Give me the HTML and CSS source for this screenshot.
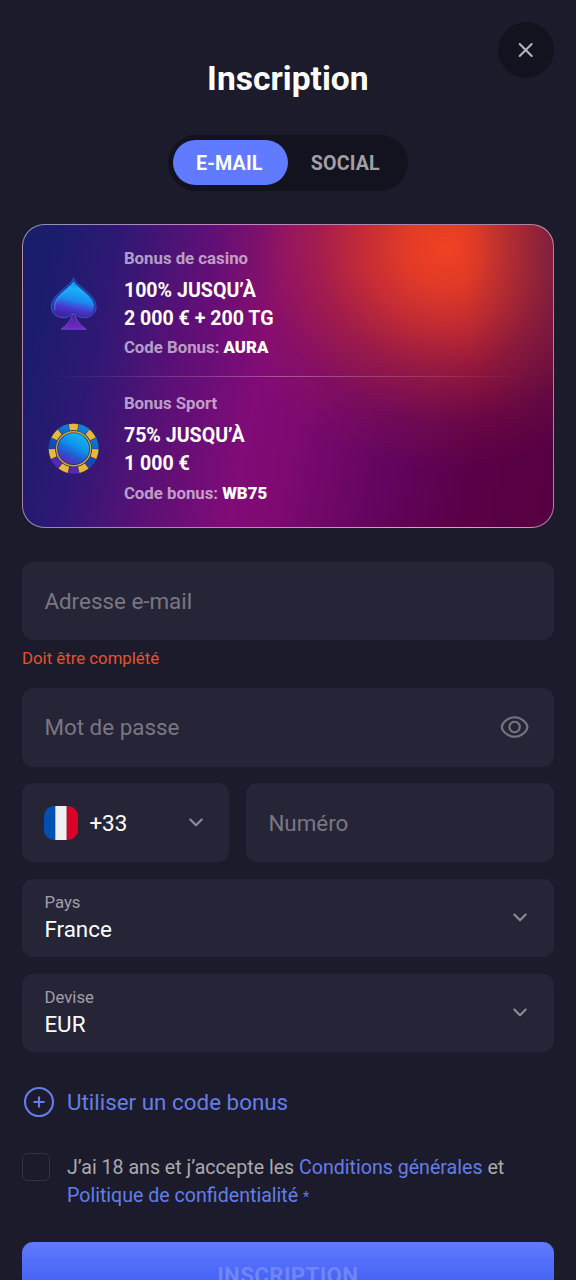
FILE: index.html
```html
<!DOCTYPE html>
<html lang="fr">
<head>
<meta charset="utf-8">
<title>Inscription</title>
<link rel="stylesheet" href="styles.css">
</head>
<body>
<main class="page">
  <button class="close" aria-label="Fermer">
    <svg width="56" height="56" viewBox="0 0 56 56"><path d="M21.7 22l12 12M33.7 22l-12 12" stroke="#b4b4bb" stroke-width="2.1" stroke-linecap="round"/></svg>
  </button>
  <h1 class="title">Inscription</h1>
  <div class="tabs">
    <span class="tab tab-active">E-MAIL</span>
    <span class="tab">SOCIAL</span>
  </div>

  <section class="bonus">
    <div class="offer">
      <svg class="offer-icon" viewBox="0 0 54 56">
        <defs>
          <linearGradient id="spade" x1=".65" y1="0" x2=".4" y2="1"><stop offset="0" stop-color="#1687e8"/><stop offset=".25" stop-color="#18b0fa"/><stop offset=".55" stop-color="#1a8cf0"/><stop offset=".78" stop-color="#4a3ad0"/><stop offset="1" stop-color="#4420a8"/></linearGradient>
          <linearGradient id="rim" x1="0" y1="0" x2="0" y2="1"><stop offset="0" stop-color="#1b55c4"/><stop offset=".6" stop-color="#2458c8"/><stop offset="1" stop-color="#7438d0"/></linearGradient>
          <linearGradient id="stem" x1="0" y1="0" x2="0" y2="1"><stop offset="0" stop-color="#3d2496"/><stop offset="1" stop-color="#7429c8"/></linearGradient>
        </defs>
        <g transform="translate(-.4 1.200)">
          <path d="M26 38C25 45 20 50 14.500 54H39.500C34 50 29 45 28 38Z" fill="url(#stem)" stroke="#6a48d0" stroke-width="1"/>
          <path d="M27 2.500C29 11 49.500 18.500 49.500 31.500C49.500 42.500 34 46 28.500 38.500H25.500C20 46 4.700 42.500 4.700 31.500C4.700 18.500 25 11 27 2.500Z" fill="#1a3b9e" stroke="url(#rim)" stroke-width="1"/>
          <path d="M27 5.500C30 13 47.500 20 47.500 31.300C47.500 41.500 34 43.500 28 36.500H26C20 43.500 6.700 41.500 6.700 31.300C6.700 20 24 13 27 5.500Z" fill="url(#spade)"/>
          <path d="M8.500 35C6 26 15 20 22 14" fill="none" stroke="#58bafa" stroke-width="1" opacity=".45"/>
        </g>
      </svg>
      <div class="offer-text">
        <p class="offer-name">Bonus de casino</p>
        <p class="offer-value">100% JUSQU’À<br>2 000 € + 200 TG</p>
        <p class="offer-code">Code Bonus: <b>AURA</b></p>
      </div>
    </div>
    <div class="divider"></div>
    <div class="offer">
      <svg class="offer-icon" viewBox="0 0 54 56">
        <defs>
          <linearGradient id="ring" x1=".7" y1="0" x2=".3" y2="1"><stop offset="0" stop-color="#1182d8"/><stop offset=".6" stop-color="#0d4db5"/><stop offset=".85" stop-color="#5427b5"/></linearGradient>
          <linearGradient id="core" x1=".75" y1=".05" x2=".25" y2="1"><stop offset="0" stop-color="#12b6f2"/><stop offset=".38" stop-color="#0d94ec"/><stop offset=".68" stop-color="#2459d2"/><stop offset=".98" stop-color="#6a20b8"/></linearGradient>
        </defs>
        <g transform="translate(26.600 29.700)">
          <circle r="25.500" fill="#182859"/>
          <circle r="21.200" fill="none" stroke="url(#ring)" stroke-width="7.800"/>
          <circle r="21.200" fill="none" stroke="#3b3440" stroke-width="8" pathLength="70" stroke-dasharray="5 5" stroke-dashoffset="2.500" transform="rotate(-90)"/>
          <circle r="21.700" fill="none" stroke="#e8b83c" stroke-width="6.400" pathLength="70" stroke-dasharray="4.500 5.500" stroke-dashoffset="2.250" transform="rotate(-90)"/>
          <circle r="18.200" fill="#293052"/>
          <circle r="17" fill="#182859" stroke="#cda54a" stroke-width="1.400"/>
          <circle r="15.600" fill="url(#core)"/>
        </g>
      </svg>
      <div class="offer-text">
        <p class="offer-name">Bonus Sport</p>
        <p class="offer-value">75% JUSQU’À<br>1 000 €</p>
        <p class="offer-code">Code bonus: <b>WB75</b></p>
      </div>
    </div>
  </section>

  <form class="form">
    <div class="field-group">
      <div class="field"><span class="placeholder">Adresse e-mail</span></div>
      <p class="error">Doit être complété</p>
    </div>
    <div class="field">
      <span class="placeholder">Mot de passe</span>
      <svg class="eye" width="34" height="34" viewBox="0 0 34 34" fill="none" stroke="#777582" stroke-width="2.100"><path d="M3.800 17C3.800 13.500 9.600 7.200 16.600 7.200S29.400 13.500 29.400 17S23.600 26.800 16.600 26.800S3.800 20.500 3.800 17Z"/><circle cx="16.600" cy="17" r="5.200"/></svg>
    </div>
    <div class="phone">
      <div class="field field-code">
        <svg class="flag" viewBox="0 0 34 34"><path fill="#0050b2" d="M0 0h11.500v34H0z"/><path fill="#f0f0f0" d="M11.300 0h11.500v34H11.300z"/><path fill="#d90128" d="M22.700 0H34v34H22.700z"/></svg>
        <span class="value">+33</span>
        <svg class="chevron" width="22" height="22" viewBox="0 0 22 22"><path d="M5.300 7.500l5.700 5.700 5.700-5.700"/></svg>
      </div>
      <div class="field field-number"><span class="placeholder">Numéro</span></div>
    </div>
    <div class="field">
      <div class="stack"><span class="label">Pays</span><span class="value">France</span></div>
      <svg class="chevron" width="22" height="22" viewBox="0 0 22 22"><path d="M5.300 7.500l5.700 5.700 5.700-5.700"/></svg>
    </div>
    <div class="field">
      <div class="stack"><span class="label">Devise</span><span class="value">EUR</span></div>
      <svg class="chevron" width="22" height="22" viewBox="0 0 22 22"><path d="M5.300 7.500l5.700 5.700 5.700-5.700"/></svg>
    </div>
    <div class="promo">
      <svg width="34" height="34" viewBox="0 0 34 34" fill="none" stroke="#647de9" stroke-width="2.100"><circle cx="17" cy="17" r="14"/><path d="M11.400 17h11.200M17 11.400v11.200"/></svg>
      <span>Utiliser un code bonus</span>
    </div>
    <div class="terms">
      <span class="checkbox"></span>
      <p>J’ai 18 ans et j’accepte les <a>Conditions générales</a> et <a>Politique de confidentialité <small>*</small></a></p>
    </div>
    <button type="button" class="submit">INSCRIPTION</button>
  </form>
</main>
</body>
</html>
```
FILE: styles.css
```css
* { box-sizing: border-box; }
html { overflow: hidden; }
body {
  margin: 0;
  height: 1280px;
  overflow: hidden;
  background: #1c1b2b;
  color: #fff;
  font-family: Roboto, sans-serif;
}
p, h1 { margin: 0; }
.page {
  position: relative;
  padding: 59px 22.4px 0 22px;
}
.close {
  position: absolute;
  top: 22.4px;
  right: 22.4px;
  width: 56px;
  height: 56px;
  padding: 0;
  border: 0;
  border-radius: 50%;
  background: #13121f;
}
.close svg { display: block; }
.title {
  height: 40px;
  font-size: 33.6px;
  line-height: 40px;
  font-weight: 700;
  text-align: center;
}
.tabs {
  display: flex;
  width: 240px;
  height: 56px;
  margin: 35.500px auto 0;
  padding: 5px;
  border-radius: 28px;
  background: #13121f;
}
.tab {
  width: 115.500px;
  height: 45px;
  font-size: 19.6px;
  line-height: 48px;
  font-weight: 700;
  letter-spacing: .2px;
  text-align: center;
  color: #a1a0a5;
}
.tab-active {
  padding-right: 2px;
  border-radius: 23px;
  background: #607bff;
  color: #fff;
}
.bonus {
  height: 304px;
  margin-top: 33.500px;
  padding: 21px 21.4px;
  border: 1px solid rgba(255, 255, 255, .5);
  border-radius: 22.4px;
  background-color: #560042;
  background-image:
    radial-gradient(ellipse 90px 200px at 100% 25px, rgba(75, 30, 75, .42), rgba(75, 30, 75, 0)),
    radial-gradient(ellipse 235px 220px at 423px 24px, #f04122 0, rgba(238, 64, 34, .92) 16%, rgba(225, 56, 38, .77) 34%, rgba(200, 46, 44, .5) 55%, rgba(170, 36, 50, .18) 79%, rgba(160, 30, 60, 0) 100%),
    linear-gradient(102deg, #1a1c6c 5%, #301874 17%, #5c1076 31%, #810b78 45%, #7d0a70 53%, #640560 69%, #5a0048 84%, #560040 100%);
}
.offer {
  display: flex;
  align-items: center;
  gap: 23px;
}
.offer-icon {
  flex: none;
  width: 54px;
  height: 56px;
  margin: -3px 0 0 2.500px;
}
.offer-name, .offer-code {
  font-size: 16.8px;
  line-height: 25px;
  font-weight: 700;
  color: rgba(255, 255, 255, .6);
}
.offer-code { margin-top: 2.600px; }
.offer-code b { color: #fff; }
.offer-value {
  margin-top: 5.600px;
  font-size: 19.6px;
  line-height: 28px;
  font-weight: 700;
}
.divider {
  height: 1.400px;
  margin: 15.600px 0 14.200px;
  background: linear-gradient(90deg, transparent, rgba(255, 255, 255, .3) 50%, transparent);
}
.form {
  display: flex;
  flex-direction: column;
  gap: 16.800px;
  margin-top: 33.600px;
}
.field {
  display: flex;
  align-items: center;
  height: 78.400px;
  padding: 0 22.400px;
  border-radius: 11.200px;
  background: #262437;
  font-size: 22.4px;
  line-height: 28px;
}
.placeholder { color: #797783; }
.error {
  height: 31.400px;
  padding-top: 7px;
  font-size: 16.8px;
  line-height: 22.400px;
  color: #e4532d;
}
.eye {
  margin-left: auto;
  margin-right: -.4px;
}
.phone {
  display: flex;
  gap: 16.800px;
}
.field-code { width: 207.200px; }
.field-number { flex: 1; }
.flag {
  width: 34px;
  height: 34px;
  margin-right: 11px;
  border-radius: 10px;
}
.chevron {
  margin-left: auto;
  fill: none;
  stroke: #8e8c99;
  stroke-width: 2.100;
  stroke-linecap: round;
  stroke-linejoin: round;
}
.stack {
  display: flex;
  flex-direction: column;
}
.label {
  font-size: 16.8px;
  line-height: 24px;
  color: #a09fa8;
}
.stack .value { line-height: 31px; }
.promo {
  display: flex;
  align-items: center;
  gap: 11px;
  margin-top: 16.300px;
  font-size: 22.4px;
  line-height: 34px;
  color: #647de9;
}
.terms {
  display: flex;
  gap: 17px;
  margin-top: 16.500px;
  font-size: 19.6px;
  line-height: 28px;
  color: #aaa9b0;
}
.terms p { padding-top: 1.100px; }
.terms a { color: #647de9; }
.terms small { font-size: 14px; }
.checkbox {
  flex: none;
  width: 28px;
  height: 28px;
  border: 1.400px solid #343244;
  border-radius: 5.600px;
}
.submit {
  height: 67px;
  margin-top: 14.700px;
  padding: 0;
  border: 0;
  border-radius: 11.200px;
  background: linear-gradient(#607bff, #3351ee);
  color: #6f85fa;
  font: 700 22.4px/67px Roboto, sans-serif;
  letter-spacing: .3px;
}
```
